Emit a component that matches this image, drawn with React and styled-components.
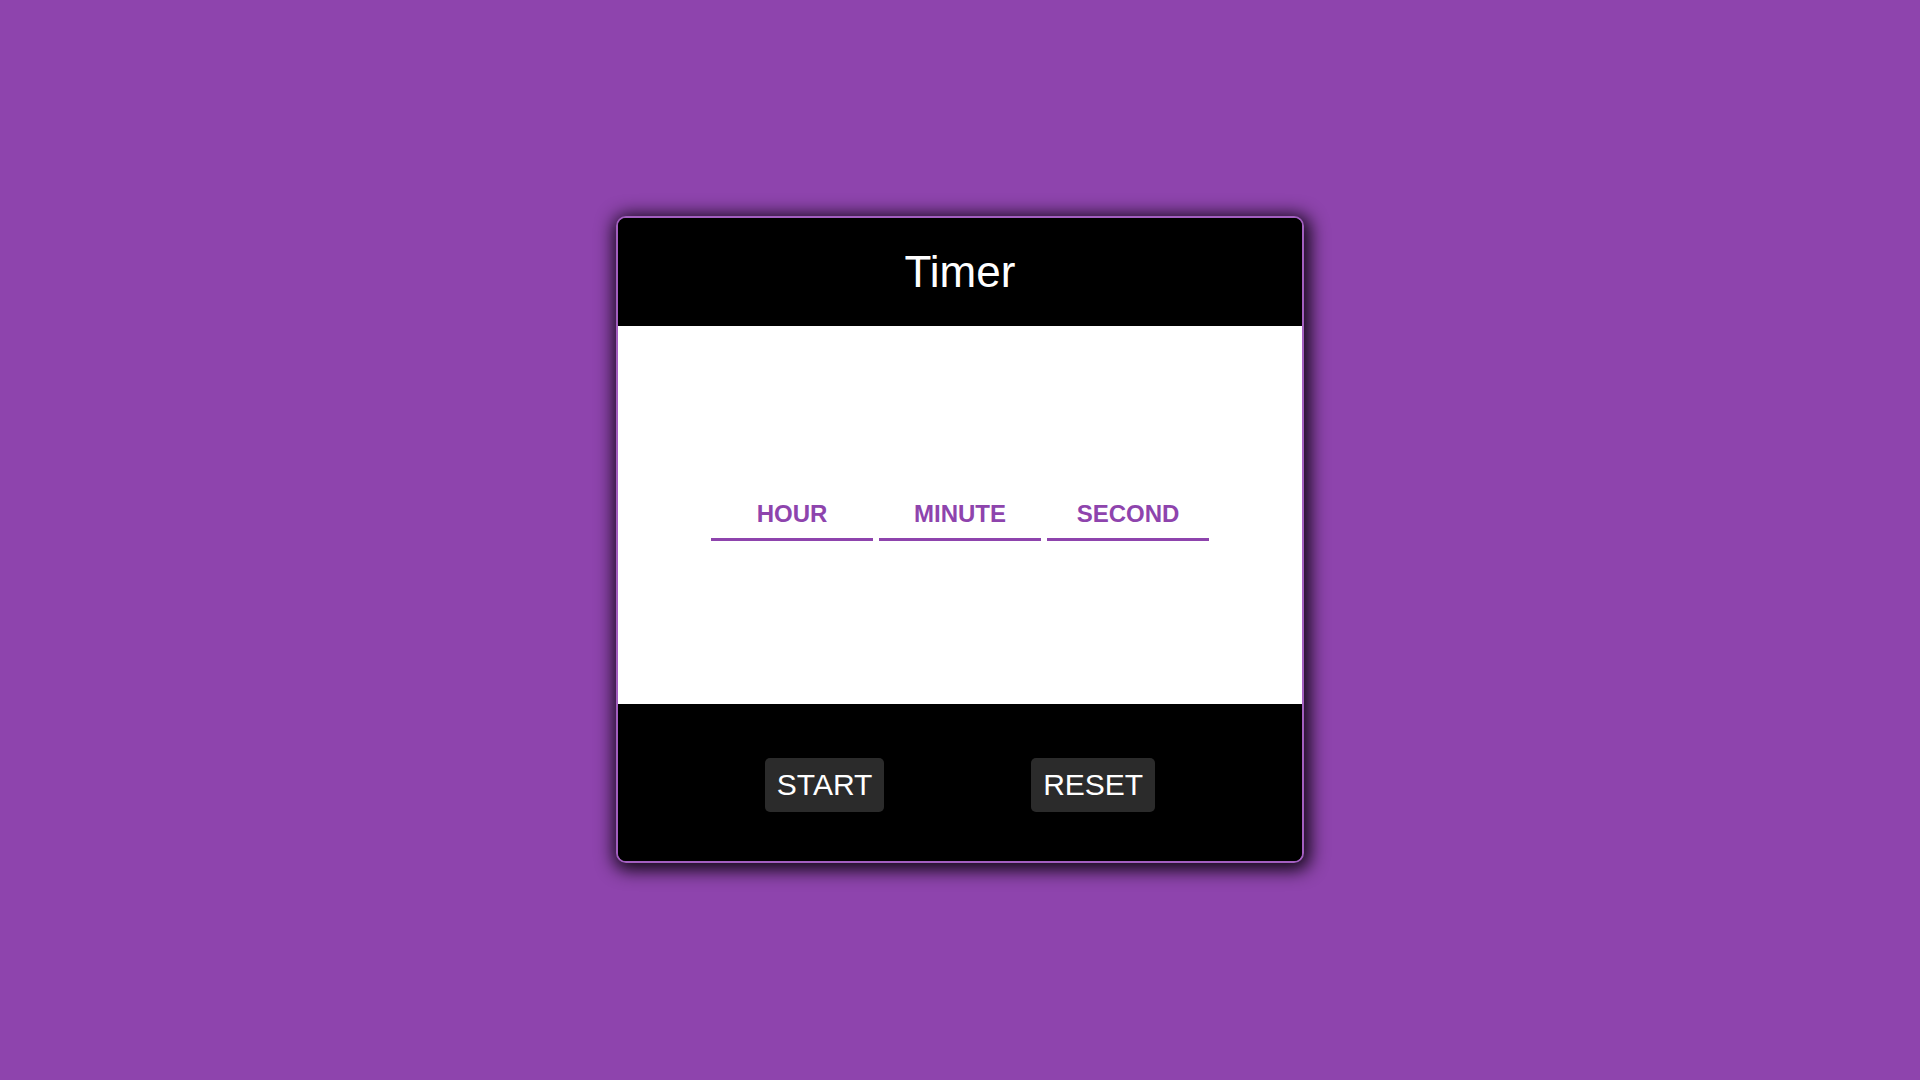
import React from 'react';
import styled, { createGlobalStyle } from 'styled-components';

const GlobalStyle = createGlobalStyle`
  html, body {
    margin: 0;
    padding: 0;
    height: 100%;
    background-color: #8e44ad;
    font-family: "Liberation Sans", Arial, sans-serif;
  }
  #root {
    height: 100%;
  }
`;

export default function App() {
  return (
    <>
      <GlobalStyle />
      <Page>
        <Card>
          <Header>
            <Title>Timer</Title>
          </Header>
          <Body>
            <Fields>
              <Field type="text" placeholder="HOUR" />
              <Field type="text" placeholder="MINUTE" />
              <Field type="text" placeholder="SECOND" />
            </Fields>
          </Body>
          <Footer>
            <Button>START</Button>
            <Button>RESET</Button>
          </Footer>
        </Card>
      </Page>
    </>
  );
}

const Page = styled.main`
  width: 100%;
  height: 1080px;
  display: flex;
  justify-content: center;
  padding-top: 216px;
  box-sizing: border-box;
`;

const Card = styled.section`
  width: 684px;
  height: 643px;
  display: flex;
  flex-direction: column;
  border: 2px solid #a35fc0;
  border-radius: 10px;
  overflow: hidden;
  background-color: #000;
  box-shadow: 2px 3px 18px 4px rgba(0, 0, 0, 0.9);
`;

const Header = styled.header`
  height: 108px;
  display: flex;
  align-items: center;
  justify-content: center;
  background-color: #000;
`;

const Title = styled.h1`
  margin: 0;
  color: #fff;
  font-size: 44px;
  font-weight: 400;
`;

const Body = styled.div`
  height: 378px;
  display: flex;
  align-items: center;
  justify-content: center;
  background-color: #fff;
`;

const Fields = styled.div`
  display: flex;
  gap: 6px;
`;

const Field = styled.input`
  width: 162px;
  height: 52px;
  padding: 0;
  box-sizing: border-box;
  border: none;
  border-bottom: 3px solid #8e44ad;
  outline: none;
  background: transparent;
  text-align: center;
  font-family: "Liberation Sans", Arial, sans-serif;
  font-size: 24px;
  font-weight: 700;
  color: #8e44ad;

  &::placeholder {
    color: #8e44ad;
    opacity: 1;
  }
`;

const Footer = styled.footer`
  flex: 1;
  display: flex;
  align-items: center;
  justify-content: space-evenly;
  padding-top: 4px;
  background-color: #000;
`;

const Button = styled.button`
  height: 54px;
  padding: 0 12px;
  border: none;
  border-radius: 5px;
  background-color: #2b2b2b;
  color: #fff;
  font-family: "Liberation Sans", Arial, sans-serif;
  font-size: 30px;
  cursor: pointer;
`;
